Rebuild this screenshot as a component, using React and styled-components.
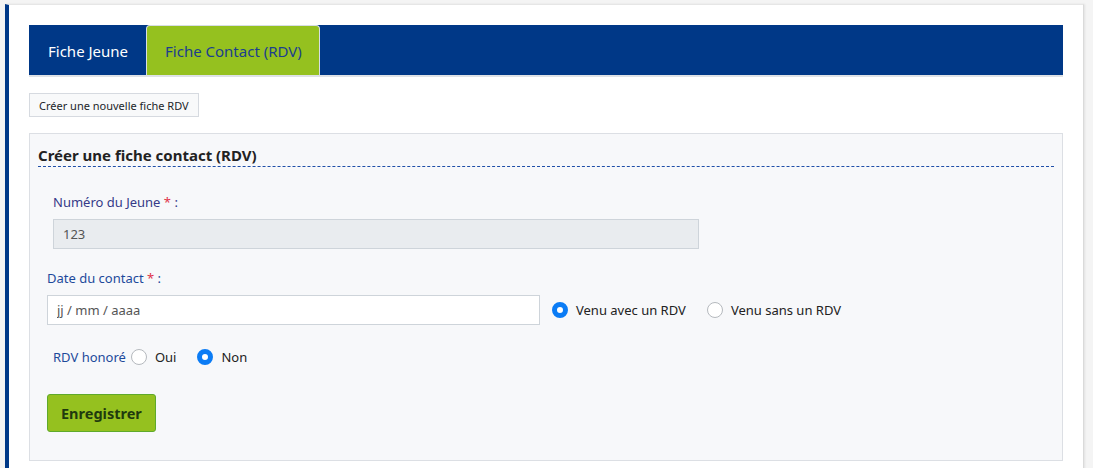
import React, { useState } from 'react';
import styled, { createGlobalStyle } from 'styled-components';

const GlobalStyle = createGlobalStyle`
  html, body {
    margin: 0;
    padding: 0;
    background: #f4f4f4;
    font-family: "Noto Sans", "Open Sans", sans-serif;
    color: #212529;
    overflow: hidden;
  }
`;

const Page = styled.div`
  padding: 4px 8px 0 5px;
  height: 468px;
  box-sizing: border-box;
`;

const Card = styled.div`
  background: #fff;
  border-left: 4px solid #003887;
  border-top: 1px solid #e6e6e6;
  border-right: 1px solid #dadada;
  box-shadow: 1px 0 2px rgba(0, 0, 0, 0.08);
  padding: 20px 20px 0 20px;
  width: 1079px;
  box-sizing: border-box;
  min-height: 470px;
`;

const TabBar = styled.div`
  display: flex;
  background: #003887;
  height: 50px;
  border-bottom: 2px solid #dee2e6;
`;

const Tab = styled.div`
  display: flex;
  align-items: center;
  padding: 0 17px 0 18px;
  font-size: 15px;
  color: ${(p) => (p.$active ? '#1b3e8e' : '#ffffff')};
  background: ${(p) => (p.$active ? '#95c11f' : 'transparent')};
  border: ${(p) => (p.$active ? '1px solid #d7dde4' : '1px solid transparent')};
  border-bottom: none;
  border-radius: 4px 4px 0 0;
  cursor: pointer;
`;

const SmallButton = styled.button`
  margin-top: 16px;
  font-family: inherit;
  font-size: 11px;
  color: #212529;
  background: #f8f9fa;
  border: 1px solid #d6dae0;
  padding: 0 9px;
  height: 24px;
`;

const Panel = styled.div`
  margin-top: 16px;
  background: #f7f8fa;
  border: 1px solid #dcdfe4;
  padding: 10px 8px 28px 8px;
`;

const PanelTitle = styled.h3`
  margin: 0;
  font-size: 15px;
  line-height: 22px;
  font-weight: 700;
  color: #222;
  border-bottom: 1px dashed #1f4fa8;
`;

const Form = styled.div`
  padding: 26px 9px 0 9px;
  display: flex;
  flex-direction: column;
`;

const Group = styled.div`
  padding-left: ${(p) => p.$indent || 0}px;
  margin-bottom: ${(p) => p.$mb || 0}px;
`;

const Label = styled.div`
  font-size: 13px;
  line-height: 18px;
  color: ${(p) => p.$color || '#1d4a9a'};
  margin-bottom: 8px;
`;

const Req = styled.span`
  color: #e0344a;
`;

const Input = styled.input`
  box-sizing: border-box;
  height: 30px;
  width: ${(p) => p.$w}px;
  font-family: inherit;
  font-size: 13px;
  color: #555;
  padding: 0 9px;
  border: 1px solid #ced4da;
  background: ${(p) => (p.disabled ? '#e9ecef' : '#fff')};
  outline: none;
  &::placeholder {
    color: #555;
  }
`;

const Row = styled.div`
  display: flex;
  align-items: center;
`;

const RadioLabel = styled.label`
  display: flex;
  align-items: center;
  font-size: 13px;
  color: #222;
  margin-left: ${(p) => p.$ml || 0}px;
  cursor: pointer;
`;

const RadioDot = styled.span`
  width: 16px;
  height: 16px;
  box-sizing: border-box;
  border-radius: 50%;
  border: ${(p) => (p.$checked ? '5px solid #0b7cf5' : '1px solid #b5b9be')};
  background: #fff;
  margin-right: 8px;
  flex-shrink: 0;
`;

const InlineLabel = styled.span`
  font-size: 13px;
  color: #1d4a9a;
  margin-right: 5px;
`;

const SaveButton = styled.button`
  align-self: flex-start;
  height: 38px;
  padding: 0 13px;
  font-family: inherit;
  font-size: 14.5px;
  font-weight: 700;
  color: #1f3a0e;
  background: #95c11f;
  border: 1px solid #5faa2a;
  border-radius: 3px;
`;

const NextHeading = styled.h3`
  margin: 3px 0 0 6px;
  font-size: 15px;
  font-weight: 700;
  color: #222;
`;

const Radio = ({ checked, onClick, ml, children }) => (
  <RadioLabel $ml={ml} onClick={onClick}>
    <RadioDot $checked={checked} />
    {children}
  </RadioLabel>
);

const App = () => {
  const [venu, setVenu] = useState('avec');
  const [honore, setHonore] = useState('non');

  return (
    <>
      <GlobalStyle />
      <Page>
        <Card>
          <TabBar>
            <Tab>Fiche Jeune</Tab>
            <Tab $active>Fiche Contact (RDV)</Tab>
          </TabBar>
          <SmallButton>Créer une nouvelle fiche RDV</SmallButton>
          <Panel>
            <PanelTitle>Créer une fiche contact (RDV)</PanelTitle>
            <Form>
              <Group $indent={6} $mb={20}>
                <Label $color="#353a88">
                  Numéro du Jeune <Req>*</Req> :
                </Label>
                <Input $w={646} disabled value="123" readOnly />
              </Group>
              <Group $mb={23}>
                <Label>
                  Date du contact <Req>*</Req> :
                </Label>
                <Row>
                  <Input $w={493} placeholder="jj / mm / aaaa" />
                  <Radio ml={12} checked={venu === 'avec'} onClick={() => setVenu('avec')}>
                    Venu avec un RDV
                  </Radio>
                  <Radio ml={21} checked={venu === 'sans'} onClick={() => setVenu('sans')}>
                    Venu sans un RDV
                  </Radio>
                </Row>
              </Group>
              <Group $indent={6} $mb={28}>
                <Row>
                  <InlineLabel>RDV honoré</InlineLabel>
                  <Radio checked={honore === 'oui'} onClick={() => setHonore('oui')}>
                    Oui
                  </Radio>
                  <Radio ml={21} checked={honore === 'non'} onClick={() => setHonore('non')}>
                    Non
                  </Radio>
                </Row>
              </Group>
              <SaveButton>Enregistrer</SaveButton>
            </Form>
          </Panel>
          <NextHeading>Liste des contacts</NextHeading>
        </Card>
      </Page>
    </>
  );
};

export default App;
